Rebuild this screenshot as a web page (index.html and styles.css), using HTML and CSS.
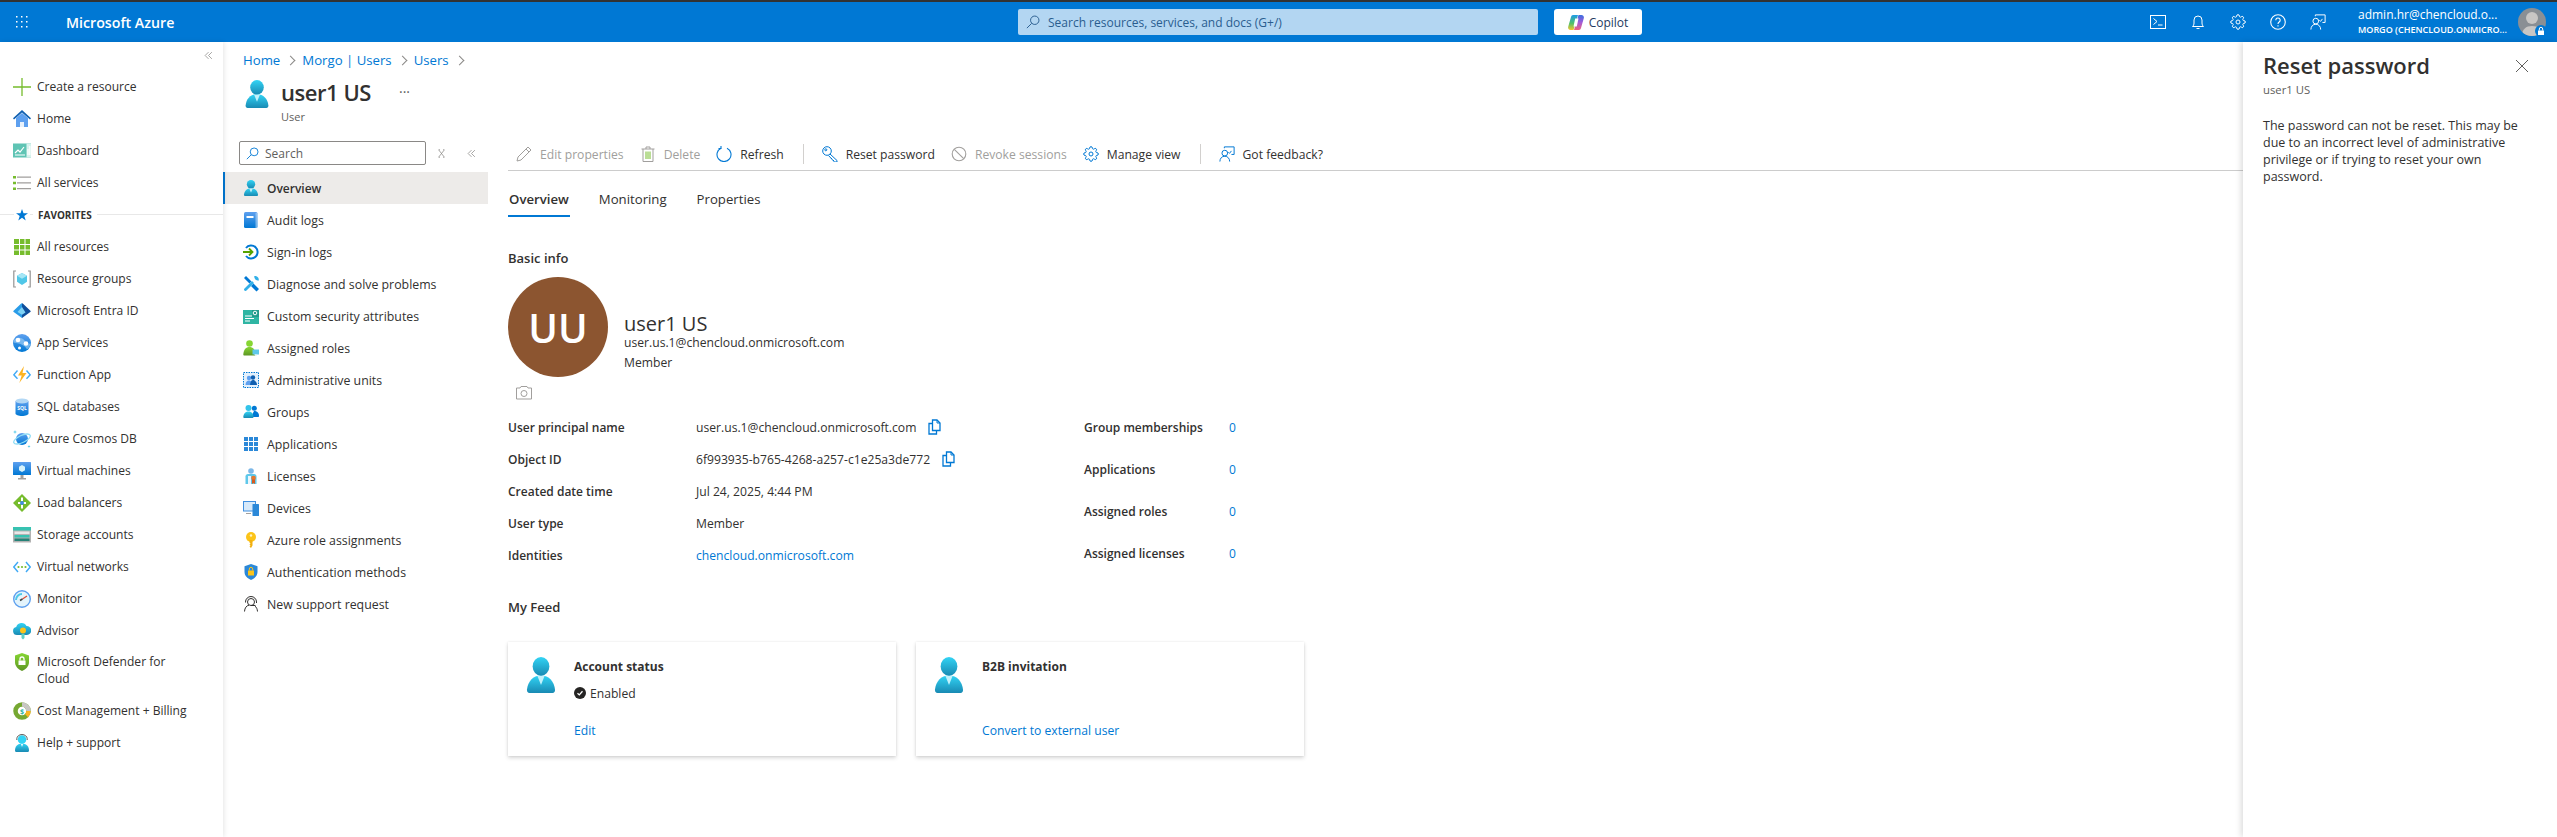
FILE: index.html
```html
<!DOCTYPE html>
<html lang="en">
<head>
    <meta charset="UTF-8">
    <title>user1 US - Microsoft Azure</title>
    <link rel="stylesheet" href="styles.css">
</head>
<body>
    <!-- Shared icons -->
    <svg class="sprite" xmlns="http://www.w3.org/2000/svg">
        <defs>
            <linearGradient id="g-user" x1="0" y1="0" x2="0" y2="1"><stop offset="0" stop-color="#32d4f5"/><stop offset="1" stop-color="#198ab3"/></linearGradient>
            <linearGradient id="g-blue" x1="0" y1="0" x2="0" y2="1"><stop offset="0" stop-color="#5ea0ef"/><stop offset="1" stop-color="#0078d4"/></linearGradient>
            <linearGradient id="g-green" x1="0" y1="0" x2="0" y2="1"><stop offset="0" stop-color="#86d633"/><stop offset="1" stop-color="#5e9624"/></linearGradient>
            <linearGradient id="g-cop-l" x1="0" y1="0" x2="0" y2="1"><stop offset="0" stop-color="#1e9be8"/><stop offset=".55" stop-color="#4fc06a"/><stop offset="1" stop-color="#f5c52c"/></linearGradient>
            <linearGradient id="g-cop-r" x1="0" y1="0" x2="0" y2="1"><stop offset="0" stop-color="#3a6fe0"/><stop offset=".5" stop-color="#a35bd8"/><stop offset="1" stop-color="#f0627a"/></linearGradient>
        </defs>
        <symbol id="i-user" viewBox="0 0 18 18" preserveAspectRatio="none">
            <path fill="url(#g-user)" d="M9 9.200c4.600 0 7.400 3 7.900 7.200.1.900-.5 1.600-1.400 1.600h-13c-.9 0-1.500-.7-1.400-1.600C1.600 12.200 4.400 9.200 9 9.200z"/>
            <circle cx="9" cy="4.700" r="4.700" fill="url(#g-user)"/>
            <path fill="#c3f1fb" d="M7 9.500h4L9 14z"/>
        </symbol>
        <symbol id="i-gear" viewBox="0 0 24 24">
            <g fill="none" stroke="currentColor" stroke-width="1.500">
                <circle cx="12" cy="12" r="3"/>
                <path d="M19.400 15a1.650 1.650 0 0 0 .33 1.820l.06.06a2 2 0 0 1 0 2.830 2 2 0 0 1-2.830 0l-.06-.06a1.650 1.650 0 0 0-1.820-.33 1.650 1.650 0 0 0-1 1.510V21a2 2 0 0 1-2 2 2 2 0 0 1-2-2v-.09A1.650 1.650 0 0 0 9 19.400a1.650 1.650 0 0 0-1.820.33l-.06.06a2 2 0 0 1-2.830 0 2 2 0 0 1 0-2.830l.06-.06a1.650 1.650 0 0 0 .33-1.820 1.650 1.650 0 0 0-1.510-1H3a2 2 0 0 1-2-2 2 2 0 0 1 2-2h.09A1.650 1.650 0 0 0 4.600 9a1.650 1.650 0 0 0-.33-1.820l-.06-.06a2 2 0 0 1 0-2.830 2 2 0 0 1 2.830 0l.06.06a1.650 1.650 0 0 0 1.820.33H9a1.650 1.650 0 0 0 1-1.510V3a2 2 0 0 1 2-2 2 2 0 0 1 2 2v.09a1.650 1.650 0 0 0 1 1.510 1.650 1.650 0 0 0 1.820-.33l.06-.06a2 2 0 0 1 2.830 0 2 2 0 0 1 0 2.830l-.06.06a1.650 1.650 0 0 0-.33 1.820V9a1.650 1.650 0 0 0 1.510 1H21a2 2 0 0 1 2 2 2 2 0 0 1-2 2h-.09a1.650 1.650 0 0 0-1.510 1z"/>
            </g>
        </symbol>
        <symbol id="i-feedback" viewBox="0 0 18 18">
            <g fill="none" stroke="currentColor" stroke-width="1.100">
                <path d="M6 2.500V1h11v8.500h-3"/>
                <path d="M10.500 7l1.300 1.300L14 5.500"/>
                <circle cx="6.500" cy="8" r="3.200"/>
                <path d="M1 17.500c0-3.500 2.200-6 5.500-6s5.500 2.500 5.500 6"/>
            </g>
        </symbol>
        <symbol id="i-search" viewBox="0 0 16 16">
            <g fill="none" stroke="currentColor" stroke-width="1.100">
                <circle cx="10" cy="6" r="4.800"/>
                <path d="M6.500 9.500L1 15"/>
            </g>
        </symbol>
        <symbol id="i-copy" viewBox="0 0 16 16">
            <g fill="none" stroke="#0078d4" stroke-width="1.300">
                <path d="M6.500 1h4.500l3 3v7.500H6.500z"/>
                <path d="M11 1v3h3" stroke-width="1"/>
                <path d="M6.500 4.500H3V15h7.500v-3.500"/>
            </g>
        </symbol>
        <symbol id="i-chev2" viewBox="0 0 12 12">
            <path fill="none" stroke="#8a8886" stroke-width="1" d="M6 1.500L1.500 6 6 10.500M10.500 1.500L6 6l4.500 4.500"/>
        </symbol>
    </svg>

    <!-- Top bar -->
    <header class="topbar">
        <div class="brand">
            <svg class="waffle" viewBox="0 0 12 12" fill="#fff">
                <rect x="0" y="0" width="1.500" height="1.500"/><rect x="5" y="0" width="1.500" height="1.500"/><rect x="10" y="0" width="1.500" height="1.500"/>
                <rect x="0" y="5" width="1.500" height="1.500"/><rect x="5" y="5" width="1.500" height="1.500"/><rect x="10" y="5" width="1.500" height="1.500"/>
                <rect x="0" y="10" width="1.500" height="1.500"/><rect x="5" y="10" width="1.500" height="1.500"/><rect x="10" y="10" width="1.500" height="1.500"/>
            </svg>
            <span class="brand-name">Microsoft Azure</span>
        </div>
        <div class="global-search">
            <svg class="global-search-icon"><use href="#i-search"/></svg>
            <span>Search resources, services, and docs (G+/)</span>
        </div>
        <div class="copilot-btn">
            <svg class="copilot-logo" viewBox="0 0 16 15">
                <path fill="url(#g-cop-l)" d="M5 0h5L5.500 15H2.500C.8 15-.3 13.500.2 11.800L3 2C3.300.800 4 0 5 0z"/>
                <path fill="url(#g-cop-r)" d="M11 15H6l4.500-15h3c1.700 0 2.800 1.500 2.300 3.200L13 13c-.3 1.200-1 2-2 2z"/>
                <path fill="#fff" d="M7.200 3.500h3.300L8.800 11.500H5.500z"/>
            </svg>
            <span>Copilot</span>
        </div>
        <div class="top-icons">
            <svg class="top-icon" viewBox="0 0 16 16" fill="none" stroke="currentColor"><rect x=".5" y="1.500" width="15" height="13"/><path d="M3.500 4.500L7 7.500 3.500 10.500M8 11h4.500"/></svg>
            <svg class="top-icon" viewBox="0 0 16 16" fill="none" stroke="currentColor"><path d="M2.500 12.500c1-.8 1.500-2 1.500-3.500V6a4 4 0 0 1 8 0v3c0 1.500.5 2.700 1.500 3.500z"/><path d="M6.500 14.500h3"/></svg>
            <svg class="top-icon"><use href="#i-gear"/></svg>
            <svg class="top-icon" viewBox="0 0 16 16" fill="none" stroke="currentColor" stroke-width="1.100"><circle cx="8" cy="8" r="7.300"/><path d="M5.800 6.200a2.200 2.200 0 1 1 3.400 1.800c-.8.500-1.200 1-1.200 2"/><path d="M8 11.300v1.300"/></svg>
            <svg class="top-icon"><use href="#i-feedback"/></svg>
        </div>
        <div class="account">
            <div class="account-name">admin.hr@chencloud.o...</div>
            <div class="account-org">MORGO (CHENCLOUD.ONMICRO...</div>
        </div>
        <div class="account-pic">
            <svg class="account-person" viewBox="0 0 28 28">
                <circle cx="14" cy="10" r="6" fill="#c8c6c4"/>
                <path fill="#c8c6c4" d="M4 28c0-7 4-10 10-10s10 3 10 10z"/>
            </svg>
            <svg class="account-lock" viewBox="0 0 12 12"><circle cx="6" cy="6" r="6" fill="#0078d4"/><path fill="#fff" d="M3 5.500h6V10H3z"/><path fill="none" stroke="#fff" d="M4.300 5.500V4a1.700 1.700 0 0 1 3.400 0v1.500"/></svg>
        </div>
    </header>

    <div class="workspace">
        <!-- Portal menu -->
        <nav class="sidebar">
            <div class="collapse-row"><svg class="chev2"><use href="#i-chev2"/></svg></div>
            <a class="side-item"><svg class="side-icon" viewBox="0 0 18 18"><path stroke="#76bc2d" stroke-width="1.300" d="M9 0v18M0 9h18"/></svg>Create a resource</a>
            <a class="side-item"><svg class="side-icon" viewBox="0 0 18 18"><path fill="#5ea0ef" d="M3 8l6-5 6 5v9H3z"/><path fill="#0f5fb0" d="M9 0L0 8.300l1 1.200L9 2.500l8 7 1-1.200z"/><path fill="#e8f1fb" d="M7 12h4v5H7z"/></svg>Home</a>
            <a class="side-item"><svg class="side-icon" viewBox="0 0 18 18"><rect y="1.500" width="18" height="14" fill="#5fc4b4"/><path fill="#d6f2ed" d="M13.500 1.500H18v14h-4.500z"/><path fill="none" stroke="#fff" stroke-width="1.200" d="M2 11l3-3 2 2 4-5"/><path stroke="#fff" stroke-width="1.200" d="M2 13h10M15 13V7M16.800 13V4"/></svg>Dashboard</a>
            <a class="side-item"><svg class="side-icon" viewBox="0 0 18 18"><path fill="#76bc2d" d="M0 2h3v2.500H0zM0 7.700h3v2.500H0zM0 13.500h3V16H0z"/><path fill="#a19f9d" d="M4 2.500h14v1.300H4zM4 8.300h14v1.300H4zM4 14h14v1.300H4z"/></svg>All services</a>
            <div class="side-section"><svg class="star" viewBox="0 0 12 12"><path fill="#0078d4" d="M6 0l1.500 4.300H12L8.300 7l1.400 4.500L6 8.800l-3.700 2.700L3.700 7 0 4.300h4.500z"/></svg><span class="side-section-label">FAVORITES</span></div>
            <a class="side-item"><svg class="side-icon" viewBox="0 0 18 18"><path fill="#76bc2d" d="M1 1h5v5H1zM7 1h4.500v5H7zM12.500 1H17v5h-4.500zM1 7h5v4.500H1zM7 7h4.500v4.500H7zM12.500 7H17v4.500h-4.500zM1 12.500h5V17H1zM7 12.500h4.500V17H7zM12.500 12.500H17V17h-4.500z"/></svg>All resources</a>
            <a class="side-item"><svg class="side-icon" viewBox="0 0 18 18"><path fill="none" stroke="#949494" stroke-width="1.200" d="M3 1H.8v16H3M15 1h2.200v16H15"/><path fill="#50c7e8" d="M9 3l5 2.800v6L9 15l-5-3.200v-6z"/><path fill="#a5e6f5" d="M9 3l5 2.800L9 8.700 4 5.800z"/></svg>Resource groups</a>
            <a class="side-item"><svg class="side-icon" viewBox="0 0 18 18"><path fill="#2a9ce8" d="M8.200 1.500L.6 8.800c-.4.400-.4 1 .1 1.300L9 16V1.200z"/><path fill="#0f4f9c" d="M9.800 1.500l7.600 7.300c.4.400.4 1-.1 1.300L9 16V1.200z"/><path fill="#7fd3f5" d="M9 5L4.500 10 9 12.800l3.500-2.300z"/></svg>Microsoft Entra ID</a>
            <a class="side-item"><svg class="side-icon" viewBox="0 0 18 18"><circle cx="9" cy="9" r="9" fill="url(#g-blue)"/><path fill="#a5d3f7" d="M1 6c3-3 8-3 11 1s5 3 5.500 2c0 3-1.500 5-3.500 6.500-2-4-6-6-13.500-7z" opacity=".6"/><circle cx="5" cy="6" r="2.300" fill="#fff"/><circle cx="13" cy="9.500" r="2.300" fill="#fff"/><circle cx="6.500" cy="14" r="1.500" fill="#fff"/></svg>App Services</a>
            <a class="side-item"><svg class="side-icon" viewBox="0 0 18 18"><path fill="none" stroke="#3fa9f5" stroke-width="1.400" d="M4.500 4.500L.8 8.800l3.700 4M13.500 4.500l3.700 4.300-3.700 4"/><path fill="#fcb423" d="M11 0L5 9.500h3.700L6.300 17 13.500 7H9.500z"/></svg>Function App</a>
            <a class="side-item"><svg class="side-icon" viewBox="0 0 18 18"><path fill="url(#g-blue)" d="M2.500 3v12.500c0 1.300 3 2.500 6.500 2.500s6.500-1.200 6.500-2.500V3z"/><ellipse cx="9" cy="3" rx="6.500" ry="2.500" fill="#b3d8f5"/><text class="sql-text" x="9" y="12" text-anchor="middle">SQL</text></svg>SQL databases</a>
            <a class="side-item"><svg class="side-icon" viewBox="0 0 18 18"><circle cx="9" cy="9" r="6" fill="url(#g-blue)"/><ellipse cx="9" cy="9" rx="9" ry="3.600" fill="none" stroke="#8fdcf5" stroke-width="1.300" transform="rotate(-25 9 9)"/><path fill="#50c7e8" d="M2 0l.5 1.500L4 2l-1.500.5L2 4l-.5-1.500L0 2l1.500-.5zM16 15l.4 1.100 1.100.4-1.100.4L16 18l-.4-1.100-1.100-.4 1.100-.4z"/></svg>Azure Cosmos DB</a>
            <a class="side-item"><svg class="side-icon" viewBox="0 0 18 18"><path fill="#a19f9d" d="M7.500 13h3v3h-3zM5 16h8v1.500H5z"/><rect y="0" width="18" height="13" rx=".5" fill="url(#g-blue)"/><path fill="#d6f2fb" d="M9 3l3 1.700v3.600L9 10 6 8.300V4.700z"/></svg>Virtual machines</a>
            <a class="side-item"><svg class="side-icon" viewBox="0 0 18 18"><path fill="#76bc2d" d="M9 0l9 9-9 9-9-9z"/><path fill="#fff" d="M8 3.500h2V7H8zM5 8h8v2H5z"/><circle cx="9" cy="9" r="2" fill="#3f8fe0"/><path fill="#fff" d="M8 11h2v3.500H8z"/></svg>Load balancers</a>
            <a class="side-item"><svg class="side-icon" viewBox="0 0 18 18"><rect y="1" width="18" height="15.500" fill="#b3b3b3"/><rect y="1" width="18" height="3.500" fill="#37c2b1"/><rect x="1.500" y="9" width="15" height="2.500" fill="#37c2b1"/><rect x="1.500" y="12.500" width="15" height="2.500" fill="#258277"/><rect x="1.500" y="5.500" width="15" height="2.500" fill="#e8e8e8"/></svg>Storage accounts</a>
            <a class="side-item"><svg class="side-icon" viewBox="0 0 18 18"><path fill="none" stroke="#3fa9f5" stroke-width="1.400" d="M5 4L.8 9 5 14M13 4l4.200 5L13 14"/><circle cx="5.500" cy="9" r="1.100" fill="#76bc2d"/><circle cx="9" cy="9" r="1.100" fill="#76bc2d"/><circle cx="12.500" cy="9" r="1.100" fill="#76bc2d"/></svg>Virtual networks</a>
            <a class="side-item"><svg class="side-icon" viewBox="0 0 18 18"><circle cx="9" cy="9" r="8.300" fill="#e3f4fc" stroke="#5ea0ef" stroke-width="1.400"/><path fill="none" stroke="#50c7e8" stroke-width="2" d="M3 10a6 6 0 0 1 6-6"/><path stroke="#e0452f" stroke-width="1.200" d="M14 6L9.500 9"/><path stroke="#404040" stroke-width="1.500" d="M9.500 9L7 10.500"/></svg>Monitor</a>
            <a class="side-item"><svg class="side-icon" viewBox="0 0 18 18"><path fill="url(#g-user)" d="M4 13a4 4 0 0 1-.8-7.900A5.500 5.500 0 0 1 13.500 4 4.500 4.500 0 0 1 14 13z"/><circle cx="10" cy="8.500" r="3" fill="#fcc419"/><path fill="#5fd0c5" d="M8.500 12h3v4l-1.500 1.500L8.500 16z"/></svg>Advisor</a>
            <a class="side-item side-item-tall"><svg class="side-icon" viewBox="0 0 18 18"><path fill="url(#g-green)" d="M9 0l7 2.500V9c0 4-3 7.500-7 9-4-1.500-7-5-7-9V2.500z"/><path fill="#fff" d="M5.500 7.500h7V12h-7z"/><path fill="none" stroke="#fff" stroke-width="1.300" d="M7 7.500V6a2 2 0 0 1 4 0v1.500"/></svg><span>Microsoft Defender for Cloud</span></a>
            <a class="side-item"><svg class="side-icon" viewBox="0 0 18 18"><circle cx="9" cy="9" r="6.500" fill="none" stroke="#76a832" stroke-width="4.500"/><path fill="none" stroke="#c8c6c4" stroke-width="4.500" d="M9 2.500A6.500 6.500 0 0 1 15.500 9"/><path fill="none" stroke="#fcb423" stroke-width="4.500" d="M15.500 9a6.500 6.500 0 0 1-2 4.700"/><text class="cost-text" x="9" y="11.500" text-anchor="middle">$</text></svg>Cost Management + Billing</a>
            <a class="side-item"><svg class="side-icon" viewBox="0 0 18 18"><path fill="url(#g-user)" d="M9 9.500c4.500 0 7 3 7 7 0 .9-.5 1.500-1.300 1.500H3.300c-.8 0-1.300-.6-1.300-1.500 0-4 2.500-7 7-7z"/><circle cx="9" cy="5.500" r="4.300" fill="#32d4f5"/><path fill="none" stroke="#605e5c" d="M3.800 6V4.800a5.200 4.300 0 0 1 10.400 0V6"/><path fill="#fff" d="M8 10h2L9 13z"/></svg>Help + support</a>
        </nav>

        <!-- Resource blade -->
        <main class="blade">
            <div class="crumbs">
                <a class="crumb">Home</a><span class="crumb-sep"></span>
                <a class="crumb">Morgo | Users</a><span class="crumb-sep"></span>
                <a class="crumb">Users</a><span class="crumb-sep"></span>
            </div>
            <div class="title-row">
                <svg class="title-icon"><use href="#i-user"/></svg>
                <div class="title-text">
                    <h1 class="title-name">user1 US</h1>
                    <div class="title-type">User</div>
                </div>
                <span class="title-more">···</span>
            </div>

            <div class="blade-body">
                <div class="res-menu">
                    <div class="res-search-row">
                        <div class="res-search">
                            <svg class="res-search-icon"><use href="#i-search"/></svg>
                            <span>Search</span>
                        </div>
                        <svg class="res-search-tool" viewBox="0 0 12 12"><path fill="none" stroke="#8a8886" d="M2.500 1.500l7 9M9.500 1.500l-7 9M2 1h2M8 1h2M2 11h2M8 11h2"/></svg>
                        <svg class="res-search-tool res-collapse"><use href="#i-chev2"/></svg>
                    </div>
                    <a class="res-item res-item-active"><svg class="res-icon"><use href="#i-user"/></svg>Overview</a>
                    <a class="res-item"><svg class="res-icon" viewBox="0 0 16 16"><rect x="1" y="0" width="13.500" height="16" rx="1.500" fill="url(#g-blue)"/><path fill="#bcd8f5" d="M12.500 1h2v15h-2z" opacity=".6"/><rect x="3.500" y="4" width="7" height="2" fill="#fff"/></svg>Audit logs</a>
                    <a class="res-item"><svg class="res-icon" viewBox="0 0 16 16"><path fill="none" stroke="#0078d4" stroke-width="2" d="M3 4a6.500 6.500 0 1 1 0 8"/><path fill="none" stroke="#57a300" stroke-width="1.800" d="M0 8h9M6 4.500L9.500 8 6 11.500"/></svg>Sign-in logs</a>
                    <a class="res-item"><svg class="res-icon" viewBox="0 0 16 16"><path fill="#0078d4" d="M3 0l4 4 1.500 1.500-2 2L1 2zM16 13l-2.500 2.500L8 10l2.500-2.500z"/><path fill="#32b0e8" d="M12 0a3.500 3.500 0 0 1 3.500 4.800L13 4 12 3l-1-2.500zM1.500 12.500L9 5l2 2-7.500 7.500a1.400 1.400 0 0 1-2-2z"/></svg>Diagnose and solve problems</a>
                    <a class="res-item"><svg class="res-icon" viewBox="0 0 16 16"><path fill="#2fb5a3" d="M0 2h16v14H0z"/><path fill="#1f8a7d" d="M9 2h7v7H9z" opacity=".6"/><circle cx="12" cy="5" r="1.800" fill="none" stroke="#fff"/><path stroke="#fff" d="M2 8h7M2 10.500h9M2 13h5"/></svg>Custom security attributes</a>
                    <a class="res-item"><svg class="res-icon" viewBox="0 0 16 16"><path fill="url(#g-green)" d="M6.500 7c3.500 0 5.500 2.500 6 7 0 1-.5 1.500-1.200 1.500H1.500C.7 15.500.2 15 .3 14 .8 9.500 3 7 6.500 7z"/><circle cx="6.500" cy="3.500" r="3.300" fill="#86d633"/><rect x="9.500" y="9.500" width="6.500" height="5" fill="#5fc8ea"/><path fill="#bfeaf7" d="M11 14h3.500L13 16z"/></svg>Assigned roles</a>
                    <a class="res-item"><svg class="res-icon" viewBox="0 0 16 16"><rect x=".5" y=".5" width="15" height="15" fill="#e3f0fc" stroke="#0078d4" stroke-dasharray="1.500 1"/><circle cx="6" cy="6" r="2.200" fill="#5ea0ef"/><path fill="#5ea0ef" d="M2.500 13c0-3 1.500-4.500 3.500-4.500S9.500 10 9.500 13z"/><circle cx="10" cy="5.500" r="2.200" fill="#0f5fb0"/><path fill="#0f5fb0" d="M7 13c.5-3 1-5 3-5s4 2 4 5z"/></svg>Administrative units</a>
                    <a class="res-item"><svg class="res-icon" viewBox="0 0 16 16"><path fill="#0078d4" d="M11 7c3 0 5 1.500 5 5 0 .7-.3 1-1 1H8z"/><circle cx="11.300" cy="4.300" r="2.500" fill="#0078d4"/><path fill="url(#g-user)" d="M5.500 7.500c3.500 0 5 2.500 5 5.500 0 .7-.5 1-1 1H1.500C.7 14 .2 13.500.3 13c.2-3 1.700-5.500 5.200-5.500z"/><circle cx="5.500" cy="4" r="3" fill="#32c4ea"/></svg>Groups</a>
                    <a class="res-item"><svg class="res-icon" viewBox="0 0 16 16"><path fill="#2b88d8" d="M1 1h4v4H1zM6 1h4v4H6zM11 1h4v4h-4zM1 6h4v4H1zM6 6h4v4H6zM11 6h4v4h-4zM1 11h4v4H1zM6 11h4v4H6zM11 11h4v4h-4z"/></svg>Applications</a>
                    <a class="res-item"><svg class="res-icon" viewBox="0 0 16 16"><circle cx="8" cy="3" r="2.800" fill="#7cb8e8"/><path fill="#5fc8ea" d="M2.500 16V8.500c0-1.500 1-2.500 2.500-2.500h6c1.500 0 2.500 1 2.500 2.500V16z"/><path fill="#eef6fc" d="M5 8h3v8H5z"/><circle cx="10.500" cy="10" r="2.300" fill="#e8762c"/><path fill="#d85a1f" d="M9 11.500h3V16l-1.500-1L9 16z"/></svg>Licenses</a>
                    <a class="res-item"><svg class="res-icon" viewBox="0 0 16 16"><rect y="1" width="13" height="10.500" fill="#3f8fe0"/><rect x="1" y="2" width="11" height="8.500" fill="#d6e9fa"/><path fill="#a19f9d" d="M3 13h5v1H3z"/><rect x="9.500" y="4" width="6.500" height="12" rx=".5" fill="#2b88d8"/></svg>Devices</a>
                    <a class="res-item"><svg class="res-icon" viewBox="0 0 16 16"><circle cx="8" cy="5" r="5" fill="#fcc419"/><path fill="#f2b00f" d="M6.500 8h3v5.500L8 16l-1.500-1.500 1-1-1-1 1-1-1-1z"/><circle cx="8" cy="3.500" r="1.200" fill="#fff3c4"/></svg>Azure role assignments</a>
                    <a class="res-item"><svg class="res-icon" viewBox="0 0 16 16"><path fill="#2b88d8" d="M8 0l6.500 2.200V8c0 3.500-2.800 6.500-6.500 8-3.700-1.500-6.500-4.500-6.500-8V2.200z"/><path fill="#fcc419" d="M5 6.500h6v5H5z"/><path fill="none" stroke="#fcc419" d="M6.300 6.500V5a1.700 1.700 0 0 1 3.400 0v1.500"/></svg>Authentication methods</a>
                    <a class="res-item"><svg class="res-icon" viewBox="0 0 16 16"><g fill="none" stroke="#323130"><circle cx="8" cy="6" r="3.500"/><path d="M2.500 6.500V6a5.500 5.500 0 0 1 11 0v1M8 9.500h4.500M1.500 15.500c.2-3.500 2-6 4.500-6.300M14.500 15.500c-.2-2.500-1-4.300-2.500-5.300"/></g></svg>New support request</a>
                </div>

                <div class="pane">
                    <div class="cmdbar">
                        <span class="cmd cmd-off"><svg class="cmd-icon" viewBox="0 0 16 16" fill="none" stroke="#a19f9d"><path d="M12 1l3 3L5 14l-4 1 1-4zM10 3l3 3"/></svg>Edit properties</span>
                        <span class="cmd cmd-off"><svg class="cmd-icon" viewBox="0 0 16 16" fill="none" stroke="#a19f9d"><path d="M1.500 3h13M6 3V1h4v2M3 3v12.500h10V3"/><path stroke="#76bc2d" d="M6 5.500v7.500M8 5.500v7.500M10 5.500v7.500"/></svg>Delete</span>
                        <span class="cmd"><svg class="cmd-icon" viewBox="0 0 16 16" fill="none" stroke="#0078d4" stroke-width="1.100"><path d="M5 2.200a7 7 0 1 0 6 0"/><path d="M5 0v2.500H2.500"/></svg>Refresh</span>
                        <span class="cmd-sep"></span>
                        <span class="cmd"><svg class="cmd-icon" viewBox="0 0 16 16" fill="none" stroke="#0078d4"><circle cx="5" cy="5" r="4.300"/><circle cx="3.800" cy="3.800" r="1"/><path d="M8 8l7 6.500V16h-2.500L6.500 9.500M10 12l-1 1M12 14l-1 1"/></svg>Reset password</span>
                        <span class="cmd cmd-off"><svg class="cmd-icon" viewBox="0 0 16 16" fill="none" stroke="#a19f9d" stroke-width="1.100"><circle cx="8" cy="8" r="6.800"/><path d="M3.300 3.300l9.400 9.400"/></svg>Revoke sessions</span>
                        <span class="cmd cmd-blue"><svg class="cmd-icon"><use href="#i-gear"/></svg><span class="cmd-label">Manage view</span></span>
                        <span class="cmd-sep"></span>
                        <span class="cmd cmd-blue"><svg class="cmd-icon"><use href="#i-feedback"/></svg><span class="cmd-label">Got feedback?</span></span>
                    </div>

                    <div class="tabs">
                        <span class="tab tab-active">Overview</span>
                        <span class="tab">Monitoring</span>
                        <span class="tab">Properties</span>
                    </div>

                    <h2 class="section-head">Basic info</h2>
                    <div class="profile">
                        <div class="avatar-col">
                            <div class="avatar">UU</div>
                            <svg class="camera" viewBox="0 0 16 16" fill="none" stroke="#a19f9d"><path d="M.5 3H4l1-1.500h6L12 3h3.500v11H.5z"/><circle cx="8" cy="8.500" r="3"/></svg>
                        </div>
                        <div class="profile-text">
                            <div class="profile-name">user1 US</div>
                            <div class="profile-line">user.us.1@chencloud.onmicrosoft.com</div>
                            <div class="profile-line">Member</div>
                        </div>
                    </div>

                    <div class="props">
                        <div class="props-left">
                            <div class="prop"><span class="prop-key">User principal name</span><span>user.us.1@chencloud.onmicrosoft.com</span><svg class="copy"><use href="#i-copy"/></svg></div>
                            <div class="prop"><span class="prop-key">Object ID</span><span>6f993935-b765-4268-a257-c1e25a3de772</span><svg class="copy"><use href="#i-copy"/></svg></div>
                            <div class="prop"><span class="prop-key">Created date time</span><span>Jul 24, 2025, 4:44 PM</span></div>
                            <div class="prop"><span class="prop-key">User type</span><span>Member</span></div>
                            <div class="prop"><span class="prop-key">Identities</span><a class="link">chencloud.onmicrosoft.com</a></div>
                        </div>
                        <div class="props-right">
                            <div class="count"><span class="count-key">Group memberships</span><a class="link">0</a></div>
                            <div class="count"><span class="count-key">Applications</span><a class="link">0</a></div>
                            <div class="count"><span class="count-key">Assigned roles</span><a class="link">0</a></div>
                            <div class="count"><span class="count-key">Assigned licenses</span><a class="link">0</a></div>
                        </div>
                    </div>

                    <h2 class="feed-head">My Feed</h2>
                    <div class="feed">
                        <div class="card">
                            <svg class="card-icon"><use href="#i-user"/></svg>
                            <div class="card-body">
                                <div class="card-title">Account status</div>
                                <div class="card-status">
                                    <svg class="check" viewBox="0 0 12 12"><circle cx="6" cy="6" r="6" fill="#252423"/><path fill="none" stroke="#fff" stroke-width="1.300" d="M3.500 6.200l1.800 1.700 3.200-3.600"/></svg>
                                    Enabled
                                </div>
                                <a class="link card-link">Edit</a>
                            </div>
                        </div>
                        <div class="card">
                            <svg class="card-icon"><use href="#i-user"/></svg>
                            <div class="card-body">
                                <div class="card-title">B2B invitation</div>
                                <div class="card-status"></div>
                                <a class="link card-link">Convert to external user</a>
                            </div>
                        </div>
                    </div>
                </div>
            </div>
        </main>

        <!-- Context pane -->
        <aside class="context">
            <div class="context-head">
                <h2 class="context-title">Reset password</h2>
                <svg class="context-close" viewBox="0 0 12 12"><path fill="none" stroke="#605e5c" d="M0 0l12 12M12 0L0 12"/></svg>
            </div>
            <div class="context-sub">user1 US</div>
            <p class="context-msg">The password can not be reset. This may be due to an incorrect level of administrative privilege or if trying to reset your own password.</p>
        </aside>
    </div>
</body>
</html>
```

FILE: styles.css
```css
* {
    box-sizing: border-box;
}
html, body {
    margin: 0;
    height: 100%;
    overflow: hidden;
}
body {
    font-family: "Open Sans", "Noto Sans", Arial, sans-serif;
    font-size: 12.15px;
    color: #323130;
    background: #fff;
}
a {
    color: inherit;
    text-decoration: none;
}
h1, h2, p {
    margin: 0;
}
.sprite {
    display: block;
    width: 0;
    height: 0;
}

/* Top bar */
.topbar {
    display: flex;
    align-items: center;
    height: 42px;
    border-top: 2px solid #323232;
    background: #0078d4;
    color: #fff;
}
.brand {
    display: flex;
    align-items: center;
    width: 1018px;
    padding-left: 16px;
}
.waffle {
    width: 12px;
    height: 12px;
}
.brand-name {
    margin-left: 38px;
    font-size: 14.2px;
    font-weight: 600;
}
.global-search {
    display: flex;
    align-items: center;
    width: 520px;
    height: 26px;
    padding-left: 8px;
    background: #b3d6f2;
    border-radius: 2px;
    font-size: 12px;
    color: #2a5d8f;
}
.global-search-icon {
    width: 14px;
    height: 14px;
    margin-right: 8px;
    color: #2a5d8f;
}
.copilot-btn {
    display: flex;
    align-items: center;
    justify-content: center;
    gap: 5px;
    width: 88px;
    height: 26px;
    margin-left: 16px;
    background: #fff;
    border-radius: 3px;
    font-size: 12px;
    color: #243a5e;
}
.copilot-logo {
    width: 16px;
    height: 15px;
}
.top-icons {
    display: flex;
    gap: 24px;
    margin-left: 508px;
}
.top-icon {
    width: 16px;
    height: 16px;
}
.account {
    width: 160px;
    margin-left: 32px;
    line-height: 15px;
}
.account-name {
    font-size: 12px;
}
.account-org {
    font-size: 9px;
    font-weight: 600;
}
.account-pic {
    position: relative;
    width: 28px;
    height: 28px;
    overflow: visible;
}
.account-person {
    display: block;
    width: 28px;
    height: 28px;
    border-radius: 50%;
    background: #8a8f94;
}
.account-lock {
    position: absolute;
    right: -1px;
    bottom: -1px;
    width: 12px;
    height: 12px;
}

.workspace {
    display: flex;
    height: 795px;
}

/* Portal menu */
.sidebar {
    flex: none;
    width: 223px;
    font-size: 12.05px;
    box-shadow: 1px 0 5px rgba(0, 0, 0, 0.1);
    z-index: 1;
}
.collapse-row {
    display: flex;
    justify-content: flex-end;
    align-items: flex-start;
    height: 29px;
    padding: 9px 10px 0 0;
}
.chev2 {
    width: 9px;
    height: 9px;
}
.side-item {
    display: flex;
    align-items: center;
    height: 32px;
    padding: 0 0 1px 13px;
}
.side-icon {
    flex: none;
    width: 18px;
    height: 18px;
    margin-right: 6px;
}
.side-item-tall {
    align-items: flex-start;
    height: 48px;
    padding-top: 6px;
    line-height: 17px;
}
.side-item-tall span {
    width: 160px;
}
.side-section {
    display: flex;
    align-items: center;
    height: 32px;
    padding: 0 0 1px 16px;
    background: linear-gradient(#e8e8e8, #e8e8e8) left 15px / 100% 1px no-repeat;
}
.star {
    width: 12px;
    height: 12px;
    background: #fff;
    box-shadow: 0 0 0 2px #fff;
}
.side-section-label {
    padding: 0 5px;
    margin-left: 5px;
    background: #fff;
    font-size: 10px;
    font-weight: 700;
}
.sql-text {
    font-size: 5px;
    font-weight: 700;
    fill: #fff;
}
.cost-text {
    font-size: 7px;
    font-weight: 700;
    fill: #2fb5a3;
}

/* Resource blade */
.blade {
    flex: 1;
    min-width: 0;
}
.crumbs {
    display: flex;
    align-items: center;
    height: 18px;
    margin: 9px 0 0 20px;
    font-size: 13.2px;
    color: #0078d4;
}
.crumb-sep {
    width: 7px;
    height: 7px;
    margin: 0 8px 0 7px;
    border-top: 1px solid #8a8886;
    border-right: 1px solid #8a8886;
    transform: rotate(45deg);
}
.title-row {
    display: flex;
    height: 71px;
    padding: 7px 0 0 21px;
}
.title-icon {
    width: 26px;
    height: 28px;
    margin: 4px 11px 0 0;
}
.title-name {
    font-size: 22px;
    font-weight: 600;
    letter-spacing: -0.45px;
    line-height: 32px;
}
.title-type {
    margin-top: 1px;
    font-size: 11px;
    color: #605e5c;
    line-height: 16px;
}
.title-more {
    margin: 6px 0 0 28px;
    color: #605e5c;
    font-size: 14px;
}
.blade-body {
    display: flex;
}
.res-menu {
    flex: none;
    width: 265px;
    font-size: 12.35px;
}
.res-search-row {
    display: flex;
    align-items: center;
    height: 32px;
    padding: 1px 0 7px 16px;
}
.res-search {
    display: flex;
    align-items: center;
    width: 187px;
    height: 24px;
    padding-left: 6px;
    border: 1px solid #8a8886;
    border-radius: 2px;
    font-size: 12px;
    color: #605e5c;
}
.res-search-icon {
    width: 13px;
    height: 13px;
    margin-right: 6px;
    color: #0078d4;
}
.res-search-tool {
    width: 9px;
    height: 11px;
    margin-left: 11px;
}
.res-collapse {
    margin-left: 21px;
}
.res-item {
    display: flex;
    align-items: center;
    height: 32px;
    padding-left: 20px;
}
.res-item-active {
    padding-left: 18px;
    background: #edebe9;
    border-left: 2px solid #0078d4;
    font-size: 12px;
    font-weight: 600;
}
.res-icon {
    flex: none;
    width: 16px;
    height: 16px;
    margin-right: 8px;
}

/* Overview pane */
.pane {
    flex: 1;
    margin-left: 20px;
    min-width: 0;
}
.cmdbar {
    display: flex;
    align-items: center;
    height: 31px;
    padding: 0 0 2px 8px;
    border-bottom: 1px solid #ccc;
}
.cmd {
    display: flex;
    align-items: center;
    margin-right: 16px;
}
.cmd-off {
    color: #a19f9d;
}
.cmd-icon {
    flex: none;
    width: 16px;
    height: 16px;
    margin-right: 8px;
}
.cmd-blue {
    color: #0078d4;
}
.cmd-label {
    color: #323130;
}
.cmd-sep {
    width: 1px;
    height: 20px;
    margin: 0 18px 0 3px;
    background: #d2d0ce;
}
.tabs {
    display: flex;
    gap: 28px;
    height: 47px;
    padding-top: 17px;
}
.tab {
    height: 29px;
    padding: 0 1px;
    line-height: 22px;
    font-size: 13.2px;
}
.tab-active {
    border-bottom: 2px solid #0078d4;
    font-weight: 600;
}
.section-head {
    margin-top: 31px;
    font-size: 13px;
    font-weight: 600;
    line-height: 18px;
}
.profile {
    display: flex;
    margin-top: 10px;
}
.avatar-col {
    width: 116px;
}
.avatar {
    display: flex;
    align-items: center;
    justify-content: center;
    width: 100px;
    height: 100px;
    border-radius: 50%;
    background: #8c5530;
    color: #fff;
    font-size: 40px;
    font-weight: 600;
}
.camera {
    display: block;
    width: 16px;
    height: 16px;
    margin: 8px 0 0 8px;
}
.profile-text {
    padding-top: 37px;
}
.profile-name {
    font-size: 20px;
    line-height: 19px;
}
.profile-line {
    line-height: 20px;
}
.props {
    display: flex;
    margin-top: 10px;
}
.props-left {
    width: 576px;
}
.prop {
    display: flex;
    align-items: center;
    height: 32px;
}
.prop-key {
    width: 188px;
    font-size: 12px;
    font-weight: 600;
}
.copy {
    width: 16px;
    height: 16px;
    margin-left: 10px;
}
.count {
    display: flex;
    align-items: center;
    height: 42px;
    margin-top: -5px;
    margin-bottom: 5px;
    font-size: 12px;
    font-weight: 600;
}
.count-key {
    width: 145px;
}
.link {
    color: #0078d4;
    font-weight: 400;
}
.feed-head {
    margin-top: 19px;
    font-size: 13px;
    font-weight: 600;
    line-height: 18px;
}
.feed {
    display: flex;
    gap: 20px;
    margin-top: 26px;
}
.card {
    display: flex;
    width: 388px;
    height: 114px;
    padding: 15px 0 0 17px;
    box-shadow: 0 1.6px 4px rgba(0, 0, 0, 0.16), 0 0 2px rgba(0, 0, 0, 0.08);
}
.card-icon {
    width: 32px;
    height: 36px;
    margin-right: 17px;
}
.card-title {
    font-size: 12px;
    font-weight: 700;
    line-height: 20px;
}
.card-status {
    display: flex;
    align-items: center;
    gap: 4px;
    height: 20px;
    margin-top: 6px;
}
.check {
    width: 12px;
    height: 12px;
}
.card-link {
    display: block;
    margin-top: 18px;
    line-height: 20px;
}

/* Context pane */
.context {
    flex: none;
    width: 314px;
    padding: 0 0 0 20px;
    background: #fff;
    box-shadow: -2px 0 6px rgba(0, 0, 0, 0.14);
    z-index: 2;
}
.context-head {
    display: flex;
    align-items: flex-start;
    justify-content: space-between;
    height: 40px;
    padding: 8px 29px 0 0;
}
.context-title {
    font-size: 22px;
    font-weight: 600;
    line-height: 30px;
}
.context-close {
    width: 12px;
    height: 12px;
    margin-top: 10px;
}
.context-sub {
    font-size: 11.3px;
    color: #605e5c;
    line-height: 16px;
}
.context-msg {
    width: 262px;
    margin-top: 19px;
    font-size: 12.5px;
    line-height: 17px;
}
```
